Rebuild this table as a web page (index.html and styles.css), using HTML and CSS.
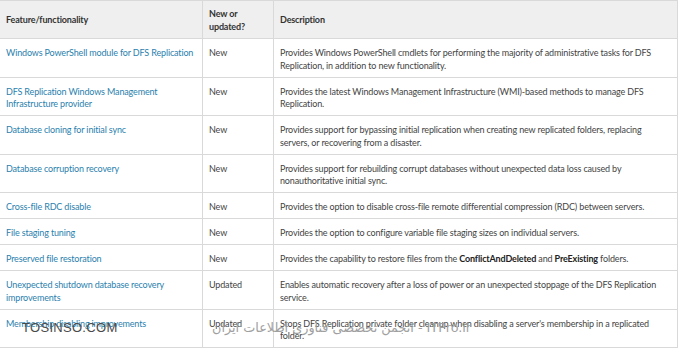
FILE: index.html
```html
<!DOCTYPE html>
<html lang="en">
<head>
  <meta charset="UTF-8" />
  <title>DFS Replication features</title>
  <link rel="stylesheet" href="styles.css">
</head>
<body>
  <div class="page">
    <table class="features">
      <colgroup>
        <col class="col-feature" />
        <col class="col-status" />
        <col class="col-desc" />
      </colgroup>
      <thead>
        <tr>
          <th>Feature/functionality</th>
          <th>New or<br>updated?</th>
          <th>Description</th>
        </tr>
      </thead>
      <tbody>
        <tr>
          <td><a href="#">Windows PowerShell module for DFS Replication</a></td>
          <td>New</td>
          <td>Provides Windows PowerShell cmdlets for performing the majority of administrative tasks for DFS Replication, in addition to new functionality.</td>
        </tr>
        <tr>
          <td><a href="#">DFS Replication Windows Management Infrastructure provider</a></td>
          <td>New</td>
          <td>Provides the latest Windows Management Infrastructure (WMI)-based methods to manage DFS Replication.</td>
        </tr>
        <tr>
          <td><a href="#">Database cloning for initial sync</a></td>
          <td>New</td>
          <td>Provides support for bypassing initial replication when creating new replicated folders, replacing servers, or recovering from a disaster.</td>
        </tr>
        <tr>
          <td><a href="#">Database corruption recovery</a></td>
          <td>New</td>
          <td>Provides support for rebuilding corrupt databases without unexpected data loss caused by nonauthoritative initial sync.</td>
        </tr>
        <tr>
          <td><a href="#">Cross-file RDC disable</a></td>
          <td>New</td>
          <td>Provides the option to disable cross-file remote differential compression (RDC) between servers.</td>
        </tr>
        <tr>
          <td><a href="#">File staging tuning</a></td>
          <td>New</td>
          <td>Provides the option to configure variable file staging sizes on individual servers.</td>
        </tr>
        <tr>
          <td><a href="#">Preserved file restoration</a></td>
          <td>New</td>
          <td>Provides the capability to restore files from the <b>ConflictAndDeleted</b> and <b>PreExisting</b> folders.</td>
        </tr>
        <tr>
          <td><a href="#">Unexpected shutdown database recovery improvements</a></td>
          <td>Updated</td>
          <td>Enables automatic recovery after a loss of power or an unexpected stoppage of the DFS Replication service.</td>
        </tr>
        <tr>
          <td><a href="#">Membership disabling improvements</a></td>
          <td>Updated</td>
          <td>Stops DFS Replication private folder cleanup when disabling a server's membership in a replicated folder.</td>
        </tr>
      </tbody>
    </table>

    <div class="mark-site">TOSINSO.COM</div>
    <div class="mark-forum" dir="ltr">انجمن تخصصی فناوری اطلاعات ایران - ITPro.ir</div>
  </div>
</body>
</html>
```
FILE: styles.css
```css
body {
  margin: 0;
  background: #fff;
  font-family: 'Lato', 'Open Sans', sans-serif;
  color: #444;
}

.page {
  position: relative;
  width: 678px;
  height: 348px;
  overflow: hidden;
}

.features {
  border-collapse: collapse;
  table-layout: fixed;
  width: 679px;
  margin-left: -1px;
  font-size: 9px;
  line-height: 12.5px;
  letter-spacing: -0.15px;
}

.col-feature {
  width: 203px;
}

.col-status {
  width: 71px;
}

.features th,
.features td {
  border: 1px solid #d9d9d9;
  padding: 8px 6px 4.5px;
  text-align: left;
  vertical-align: top;
}

.features th {
  height: 25px;
  padding-top: 7px;
  padding-bottom: 5px;
  background: #efefef;
  color: #333;
  font-weight: 700;
  vertical-align: middle;
}

.features td a {
  color: #2b7fae;
  text-decoration: none;
}

.features td b {
  color: #222;
}

.mark-site {
  position: absolute;
  left: 22px;
  top: 321px;
  font-family: 'Liberation Sans', Arial, sans-serif;
  font-size: 13px;
  line-height: 13px;
  color: #4a4a4a;
  letter-spacing: 0.3px;
}

.mark-forum {
  position: absolute;
  left: 212px;
  top: 320px;
  font-family: 'DejaVu Sans', sans-serif;
  font-size: 12.8px;
  line-height: 15px;
  color: #a0a0a0;
  white-space: nowrap;
}
```
